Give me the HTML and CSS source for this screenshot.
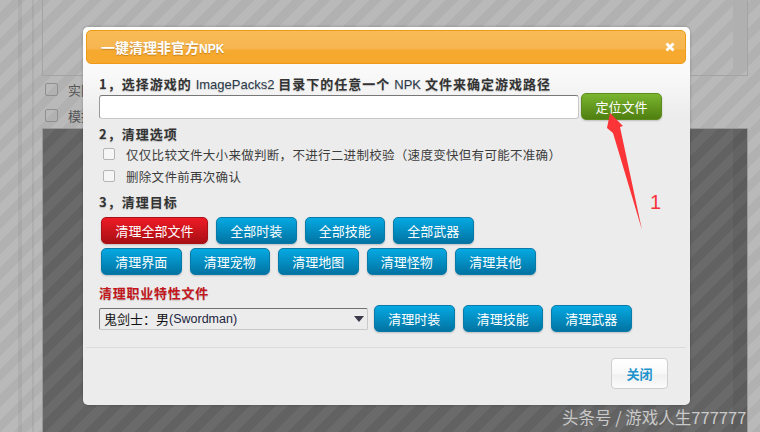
FILE: index.html
```html
<!DOCTYPE html>
<html lang="zh-CN">
<head>
    <meta charset="UTF-8">
    <title>一键清理非官方NPK</title>
    <link rel="stylesheet" href="styles.css">
</head>
<body>
    <div class="page">
        <div class="rail rail-a"></div>
        <div class="rail rail-b"></div>
        <div class="main">
            <div class="log-box"><div class="scroll-thumb"></div></div>
            <div class="bg-check"><span class="bg-box"></span>实际路径</div>
            <div class="bg-check"><span class="bg-box"></span>模拟运行</div>
            <div class="dark-panel"><div class="dark-scroll"></div></div>
        </div>
    </div>

    <div class="modal">
        <div class="modal-head">
            <span class="modal-title">一键清理非官方<span class="title-latin">NPK</span></span>
            <svg class="close-x" width="10" height="10" viewBox="0 0 10 10"><path d="M1.5 1.5 8.5 8.5M8.5 1.5 1.5 8.5" stroke="#fff" stroke-width="2.8"/></svg>
        </div>
        <div class="modal-body">
            <div class="step">1&#xFF0C;选择游戏的 <span class="latin">ImagePacks2</span> 目录下的任意一个 <span class="latin">NPK</span> 文件来确定游戏路径</div>
            <div class="path-row">
                <input class="path-input" type="text">
                <button class="btn btn-green">定位文件</button>
            </div>
            <div class="step step-2">2&#xFF0C;清理选项</div>
            <label class="opt"><span class="opt-box"></span>仅仅比较文件大小来做判断&#xFF0C;不进行二进制校验&#xFF08;速度变快但有可能不准确&#xFF09;</label>
            <label class="opt"><span class="opt-box"></span>删除文件前再次确认</label>
            <div class="step step-3">3&#xFF0C;清理目标</div>
            <div class="btn-row">
                <button class="btn btn-red">清理全部文件</button>
                <button class="btn">全部时装</button>
                <button class="btn">全部技能</button>
                <button class="btn">全部武器</button>
            </div>
            <div class="btn-row">
                <button class="btn">清理界面</button>
                <button class="btn">清理宠物</button>
                <button class="btn">清理地图</button>
                <button class="btn">清理怪物</button>
                <button class="btn">清理其他</button>
            </div>
            <div class="step-red">清理职业特性文件</div>
            <div class="job-row">
                <div class="job-select">鬼剑士&#xFF1A;男<span class="latin-job">(Swordman)</span><span class="caret"></span></div>
                <button class="btn">清理时装</button>
                <button class="btn">清理技能</button>
                <button class="btn">清理武器</button>
            </div>
        </div>
        <div class="modal-foot">
            <button class="btn-close">关闭</button>
        </div>
    </div>

    <svg class="arrow" width="60" height="125" viewBox="0 0 60 125"><polygon points="20,3 17,18 23,23 52,120 30,17 33,16" fill="#fb3438"/></svg>
    <div class="mark-one">1</div>
    <div class="watermark">头条号 / 游戏人生777777</div>
</body>
</html>
```

FILE: styles.css
```css
html, body {
    margin: 0;
    height: 432px;
    overflow: hidden;
}
body {
    position: relative;
    font-family: "Noto Sans CJK SC", "Liberation Sans", sans-serif;
    background: repeating-linear-gradient(135deg, #b9b9b9 0, #b9b9b9 9px, #b1b1b1 9px, #b1b1b1 18px);
}
.page {
    display: flex;
    height: 432px;
    padding-left: 18px;
    box-sizing: border-box;
}
.rail {
    width: 1px;
    background: rgba(0, 0, 0, 0.05);
}
.rail-a {
    width: 4px;
    margin-right: 10px;
}
.rail-b {
    width: 2px;
    margin-right: 8px;
}
.main {
    width: 706px;
}
.log-box {
    display: flex;
    justify-content: flex-end;
    height: 76px;
    border: 1px solid #a3a3a3;
    border-top: none;
    box-sizing: border-box;
}
.scroll-thumb {
    width: 14px;
    height: 74px;
    background: #b0b0b0;
    border-radius: 0 0 7px 7px;
}
.bg-check {
    display: flex;
    align-items: center;
    gap: 10px;
    height: 26px;
    margin-left: 3px;
    font-size: 13px;
    color: #555;
}
.bg-box {
    width: 11px;
    height: 11px;
    border: 1px solid #8f8f8f;
    border-radius: 2px;
}
.dark-panel {
    display: flex;
    justify-content: flex-end;
    height: 304px;
    border: 1px solid #999;
    border-bottom: none;
    box-sizing: border-box;
    background: repeating-linear-gradient(135deg, #6a6a6a 0, #6a6a6a 9px, #626262 9px, #626262 18px);
}
.dark-scroll {
    width: 14px;
    background: rgba(0, 0, 0, 0.06);
}

.modal {
    position: absolute;
    left: 83px;
    top: 27px;
    width: 607px;
    height: 378px;
    box-sizing: border-box;
    padding: 3px 4px 0 3px;
    background: linear-gradient(#ffffff 0, #f8f8f8 50px, #ececec 90px);
    border-radius: 5px;
    box-shadow: 0 0 3px rgba(0, 0, 0, 0.25);
}
.modal-head {
    display: flex;
    justify-content: space-between;
    align-items: center;
    height: 34px;
    box-sizing: border-box;
    padding: 0 10px 0 14px;
    border: 1px solid #ee9a18;
    border-radius: 5px;
    background: linear-gradient(#f8bb55, #f6b550 55%, #f6a92f 60%, #f6a92e);
}
.modal-title {
    font-size: 14px;
    font-weight: bold;
    color: #fff;
    text-shadow: 0 1px 1px rgba(120, 70, 0, 0.4);
}
.title-latin {
    font-family: "Liberation Sans", sans-serif;
    font-size: 12px;
}
.modal-body {
    padding: 12px 0 0 13px;
    height: 271px;
    border-bottom: 1px solid #dcdcdc;
    margin-bottom: 10px;
}
.step, .step-red {
    font-size: 13px;
    line-height: 16px;
    font-weight: bold;
    color: #333;
    letter-spacing: 1px;
    text-shadow: 0 1px 1px rgba(0, 0, 0, 0.2);
}
.latin {
    font-family: "Liberation Sans", sans-serif;
    font-weight: normal;
    letter-spacing: 0;
    color: #2b3a4a;
}
.path-row {
    display: flex;
    align-items: center;
    gap: 2px;
    height: 27px;
}
.path-input {
    width: 480px;
    height: 24px;
    box-sizing: border-box;
    margin: 1px 0 0;
    padding: 0 4px;
    background: #fff;
    border: 1px solid #c8c8c8;
    border-top-color: #777;
    border-left-color: #999;
    border-radius: 3px;
}
.step-2 {
    margin-top: 6px;
}
.opt {
    display: flex;
    align-items: center;
    height: 22px;
    padding-left: 4px;
    font-size: 12.5px;
    color: #3c3c3c;
    letter-spacing: 0.3px;
}
.opt:first-of-type {
    margin-top: 1px;
}
.opt-box {
    width: 10px;
    height: 10px;
    margin-right: 11px;
    background: #f6f6f6;
    border: 1px solid #b5b5b5;
    border-radius: 2px;
}
.step-3 {
    margin-top: 7px;
    margin-bottom: 7px;
}
.btn-row {
    display: flex;
    gap: 8px;
    margin: 0 0 4px 2px;
}
.btn {
    height: 27px;
    box-sizing: border-box;
    margin: 0;
    padding: 0 13.25px;
    font-family: inherit;
    font-size: 13px;
    line-height: 1;
    white-space: nowrap;
    color: #fff;
    background: linear-gradient(#05a9e2, #0273a2);
    border: 1px solid #0a7ba8;
    border-radius: 5px;
    box-shadow: 0 1px 2px rgba(0, 0, 0, 0.2);
}
.btn-green {
    width: 81px;
    padding: 0;
    background: linear-gradient(#7ab52f, #4f7f10);
    border-color: #5c8b1d;
}
.btn-red {
    padding: 0 13.5px;
    background: linear-gradient(#ee1b25, #a80f14);
    border-color: #a91116;
}
.step-red {
    margin-top: 10px;
    color: #c4161c;
    letter-spacing: 0.75px;
}
.job-row {
    display: flex;
    align-items: center;
    gap: 8px;
    margin-top: 4px;
}
.job-select {
    display: flex;
    align-items: center;
    width: 269px;
    height: 22px;
    box-sizing: border-box;
    margin-right: -2px;
    padding-left: 4px;
    font-size: 13px;
    color: #111;
    background: #ececec;
    border: 1px solid #c8c8c8;
    border-top-color: #707070;
    border-left-color: #888;
    border-radius: 2px;
}
.latin-job {
    font-family: "Liberation Sans", sans-serif;
    font-size: 12.5px;
    color: #1c2540;
}
.caret {
    width: 0;
    height: 0;
    margin-left: auto;
    margin-right: 3px;
    border-left: 5px solid transparent;
    border-right: 5px solid transparent;
    border-top: 6px solid #3a3a4a;
}
.modal-foot {
    display: flex;
    justify-content: flex-end;
    padding-right: 18px;
}
.btn-close {
    width: 57px;
    height: 31px;
    margin: 0;
    font-family: inherit;
    font-size: 13px;
    font-weight: bold;
    color: #1f94cc;
    background: linear-gradient(#ffffff, #f8f8f8 50%, #f0f0f0 55%, #fbfbfb);
    border: 1px solid #cfcfcf;
    border-radius: 4px;
}

.arrow {
    position: absolute;
    left: 590px;
    top: 110px;
}
.mark-one {
    position: absolute;
    left: 650px;
    top: 191px;
    font-family: "Liberation Sans", sans-serif;
    font-size: 20px;
    line-height: 22px;
    color: #f9333b;
}
.watermark {
    position: absolute;
    left: 562px;
    top: 405px;
    font-size: 16.5px;
    line-height: 24px;
    color: #c9c9c9;
    white-space: nowrap;
}
```
